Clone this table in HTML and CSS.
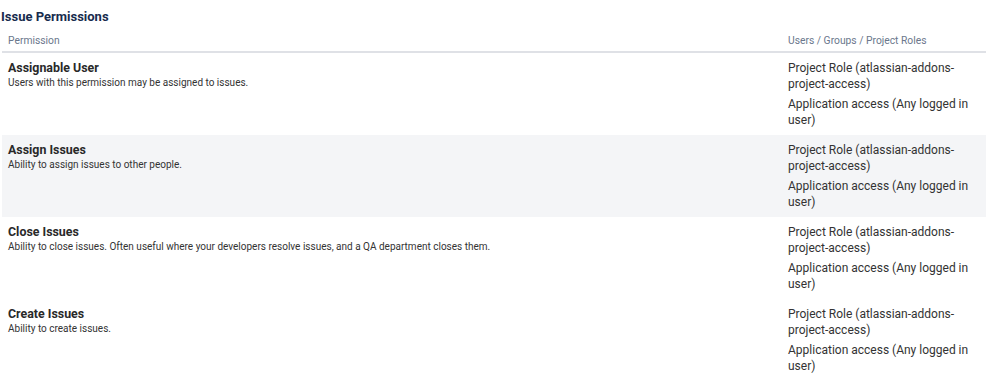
FILE: index.html
```html
<!DOCTYPE html>
<html>
<head>
<meta charset="utf-8">
<link rel="stylesheet" href="styles.css">
</head>
<body>
<h2 class="title">Issue Permissions</h2>
<table class="perm-table">
  <thead>
    <tr>
      <th class="col-perm">Permission</th>
      <th class="col-users">Users / Groups / Project Roles</th>
    </tr>
  </thead>
  <tbody>
    <tr>
      <td class="col-perm"><div class="perm-name">Assignable User</div><div class="perm-desc">Users with this permission may be assigned to issues.</div></td>
      <td class="col-users"><div class="grant">Project Role (atlassian-addons-project-access)</div><div class="grant">Application access (Any logged in user)</div></td>
    </tr>
    <tr class="alt">
      <td class="col-perm"><div class="perm-name">Assign Issues</div><div class="perm-desc">Ability to assign issues to other people.</div></td>
      <td class="col-users"><div class="grant">Project Role (atlassian-addons-project-access)</div><div class="grant">Application access (Any logged in user)</div></td>
    </tr>
    <tr>
      <td class="col-perm"><div class="perm-name">Close Issues</div><div class="perm-desc">Ability to close issues. Often useful where your developers resolve issues, and a QA department closes them.</div></td>
      <td class="col-users"><div class="grant">Project Role (atlassian-addons-project-access)</div><div class="grant">Application access (Any logged in user)</div></td>
    </tr>
    <tr>
      <td class="col-perm"><div class="perm-name">Create Issues</div><div class="perm-desc">Ability to create issues.</div></td>
      <td class="col-users"><div class="grant">Project Role (atlassian-addons-project-access)</div><div class="grant">Application access (Any logged in user)</div></td>
    </tr>
  </tbody>
</table>
</body>
</html>
```
FILE: styles.css
```css
html, body {
  margin: 0;
  padding: 0;
  background: #ffffff;
  font-family: Roboto, "Liberation Sans", sans-serif;
  color: #292929;
}
.title {
  margin: 7px 0 0 1px;
  font-size: 13px;
  line-height: 20px;
  font-weight: 700;
  color: #172b4d;
}
.perm-table {
  margin-left: 2px;
  width: 984px;
  border-collapse: collapse;
  table-layout: fixed;
}
.perm-table th {
  text-align: left;
  font-weight: 400;
  font-size: 10.3px;
  line-height: 14px;
  color: #6b778c;
  padding: 7px 6px 3px 6px;
  border-bottom: 2px solid #dfe1e6;
}
.perm-table td {
  vertical-align: top;
  padding: 7px 6px 7px 6px;
  height: 68px;
}
.perm-table .col-users {
  width: 192px;
}
.perm-table tr.alt td {
  background: #f4f5f7;
}
.perm-name {
  font-size: 12.4px;
  line-height: 16px;
  font-weight: 700;
  color: #292929;
}
.perm-desc {
  font-size: 10px;
  line-height: 14px;
  color: #333333;
}
.grant {
  font-size: 12px;
  line-height: 16px;
  color: #333333;
}
.grant + .grant {
  margin-top: 4px;
}
```
